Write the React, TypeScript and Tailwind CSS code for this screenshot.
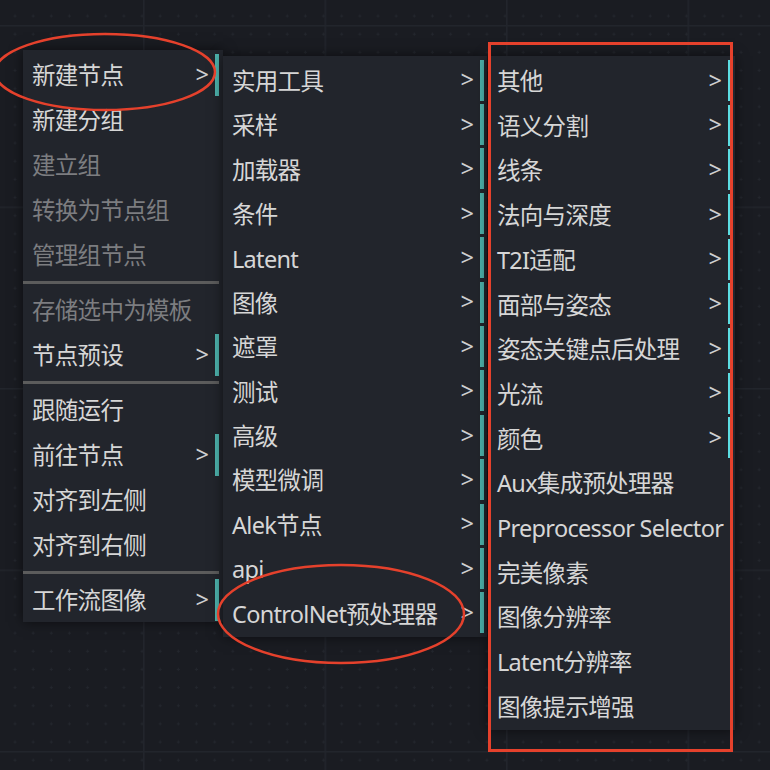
type Item = { label: string; sub?: boolean; dim?: boolean; sep?: boolean };

const mainMenu: Item[] = [
  { label: '新建节点', sub: true },
  { label: '新建分组' },
  { label: '建立组', dim: true },
  { label: '转换为节点组', dim: true },
  { label: '管理组节点', dim: true },
  { label: '', sep: true },
  { label: '存储选中为模板', dim: true },
  { label: '节点预设', sub: true },
  { label: '', sep: true },
  { label: '跟随运行' },
  { label: '前往节点', sub: true },
  { label: '对齐到左侧' },
  { label: '对齐到右侧' },
  { label: '', sep: true },
  { label: '工作流图像', sub: true },
];

const nodeMenu: Item[] = [
  '实用工具', '采样', '加载器', '条件', 'Latent', '图像', '遮罩', '测试', '高级', '模型微调', 'Alek节点', 'api', 'ControlNet预处理器',
].map((label) => ({ label, sub: true }));

const cnMenu: Item[] = [
  { label: '其他', sub: true },
  { label: '语义分割', sub: true },
  { label: '线条', sub: true },
  { label: '法向与深度', sub: true },
  { label: 'T2I适配', sub: true },
  { label: '面部与姿态', sub: true },
  { label: '姿态关键点后处理', sub: true },
  { label: '光流', sub: true },
  { label: '颜色', sub: true },
  { label: 'Aux集成预处理器' },
  { label: 'Preprocessor Selector' },
  { label: '完美像素' },
  { label: '图像分辨率' },
  { label: 'Latent分辨率' },
  { label: '图像提示增强' },
];

const Row = ({ item, rowClass, barClass }: { item: Item; rowClass: string; barClass: string }) => {
  if (item.sep) {
    return (
      <div className="flex h-[10px] items-center">
        <div className="h-[3px] w-full bg-[#5c5c5c]" />
      </div>
    );
  }
  return (
    <div className={`flex items-center justify-between pl-[9px] ${rowClass}`}>
      <span className={`whitespace-nowrap pt-[3px] tracking-[-0.7px] ${item.dim ? 'text-[#7c7d80]' : 'text-[#d6d6d6]'}`}>
        {item.label}
      </span>
      {item.sub && (
        <div className="flex items-center gap-[6px]">
          <span className="text-[#cfcfcf]">&gt;</span>
          <div className={barClass} />
        </div>
      )}
    </div>
  );
};

const Canvas = () => (
  <svg className="absolute inset-0" width="770" height="770">
    <defs>
      <pattern id="dots" width="18.15" height="18.15" patternUnits="userSpaceOnUse" patternTransform="translate(6 7)">
        <path d="M9 7.5v3M7.5 9h3" stroke="#23262d" strokeWidth="1" />
      </pattern>
      <pattern id="grid" width="181.5" height="181.5" patternUnits="userSpaceOnUse" patternTransform="translate(143 25)">
        <path d="M0.5 0V181.5M0 0.5H181.5" stroke="#22252c" strokeWidth="2" />
      </pattern>
    </defs>
    <rect width="770" height="770" fill="#1a1c22" />
    <rect width="770" height="770" fill="url(#dots)" />
    <rect width="770" height="770" fill="url(#grid)" />
  </svg>
);

const Marks = () => (
  <svg className="pointer-events-none absolute inset-0" width="770" height="770" fill="none" stroke="#e5412c">
    <ellipse cx="105" cy="72" rx="110" ry="38" strokeWidth="2.5" />
    <ellipse cx="341" cy="614" rx="123" ry="49" strokeWidth="2.5" />
    <rect x="489.5" y="43.5" width="242" height="707" strokeWidth="3" />
  </svg>
);

export default function App() {
  return (
    <div className="relative h-[770px] w-[770px] overflow-hidden font-['Noto_Sans','Noto_Sans_CJK_SC',sans-serif] text-[23.5px] leading-none">
      <Canvas />

      {/* main context menu */}
      <div className="absolute left-[23px] top-[50px] w-[200px] bg-[#22252c] pt-[2px] pr-[4px] shadow-[0_0_12px_rgba(0,0,0,0.55)]">
        {mainMenu.map((it, i) => (
          <Row key={i} item={it} rowClass="h-[45px]" barClass="h-[42px] w-[4px] bg-[#4db3ad]" />
        ))}
      </div>

      {/* 新建节点 submenu */}
      <div className="absolute left-[223px] top-[56px] w-[264px] bg-[#22252c] py-[2px] pr-[3px] shadow-[0_0_12px_rgba(0,0,0,0.55)]">
        {nodeMenu.map((it, i) => (
          <Row key={i} item={it} rowClass="h-[44.4px]" barClass="h-[41px] w-[4px] bg-[#4db3ad]" />
        ))}
      </div>

      {/* ControlNet预处理器 submenu */}
      <div className="absolute left-[488px] top-[56px] w-[247px] bg-[#22252c] py-[2px] pr-[4px] shadow-[0_0_12px_rgba(0,0,0,0.55)]">
        {cnMenu.map((it, i) => (
          <Row key={i} item={it} rowClass="h-[44.7px]" barClass="h-[41px] w-[3px] bg-[#5cdde2]" />
        ))}
      </div>

      <Marks />
    </div>
  );
}
